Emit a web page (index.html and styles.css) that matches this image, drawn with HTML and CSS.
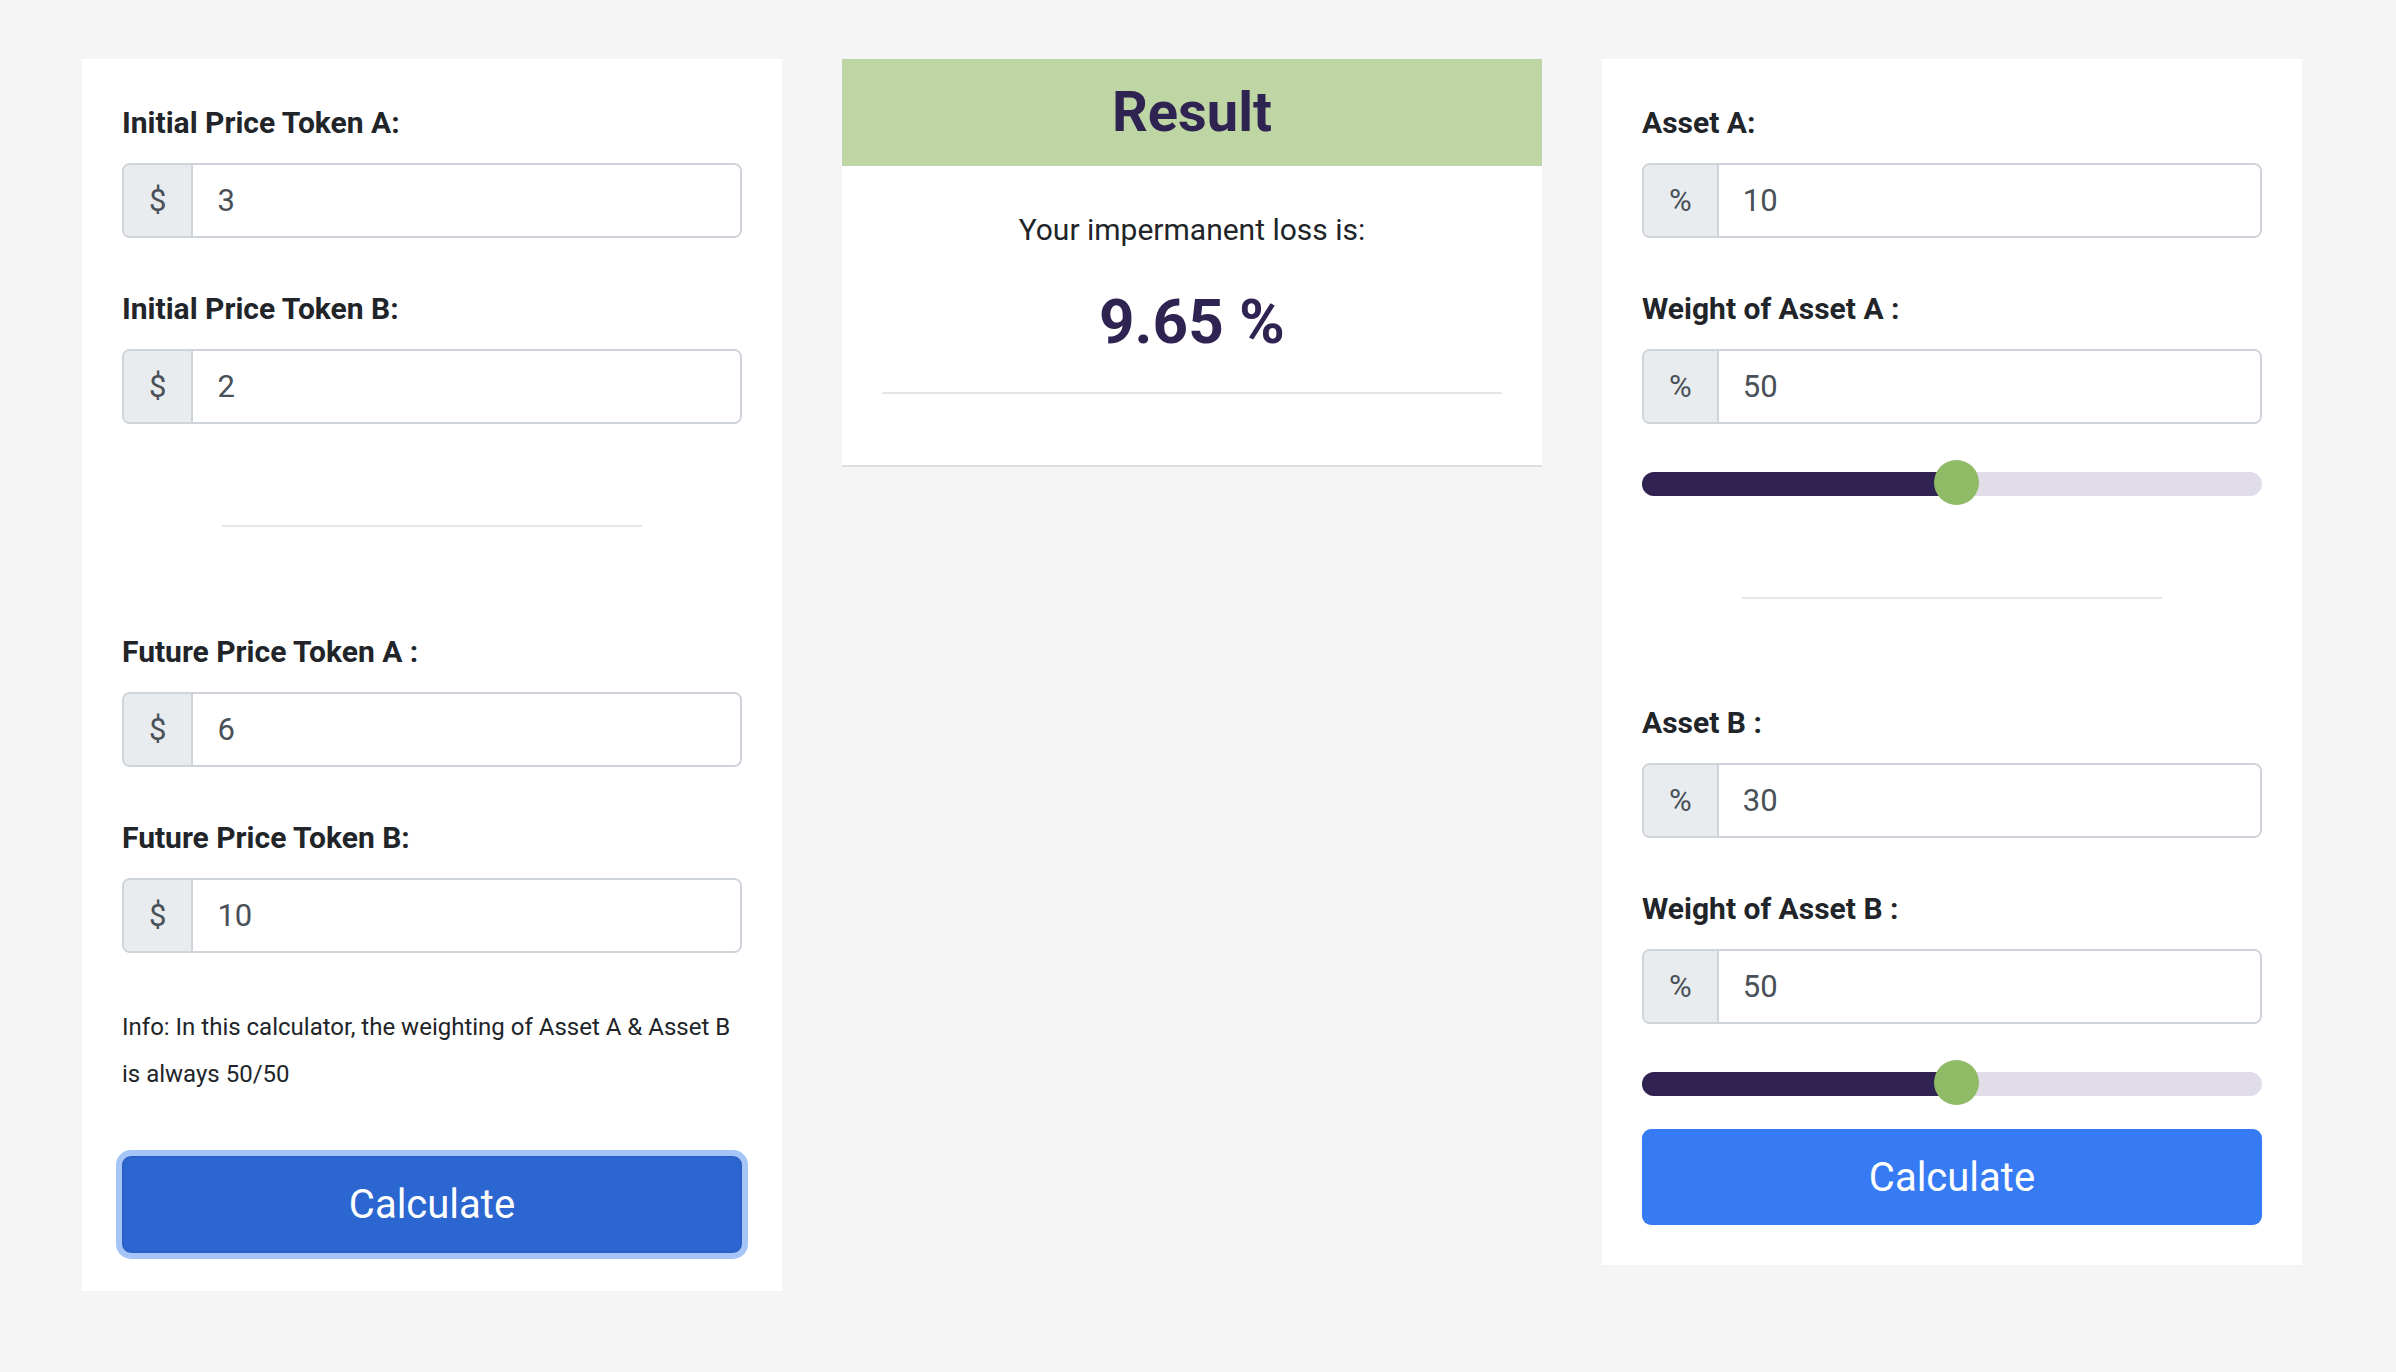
FILE: index.html
```html
<!DOCTYPE html>
<html lang="en">
<head>
<meta charset="utf-8">
<title>Impermanent Loss Calculator</title>
<link rel="stylesheet" href="styles.css">
</head>
<body>
<main class="page">
  <section class="card card-form card-left">
    <div class="field">
      <label class="field-label">Initial Price Token A:</label>
      <div class="input-group"><span class="addon">$</span><input class="input" type="text" value="3"></div>
    </div>
    <div class="field field-last">
      <label class="field-label">Initial Price Token B:</label>
      <div class="input-group"><span class="addon">$</span><input class="input" type="text" value="2"></div>
    </div>
    <div class="divider divider-left"></div>
    <div class="field">
      <label class="field-label">Future Price Token A :</label>
      <div class="input-group"><span class="addon">$</span><input class="input" type="text" value="6"></div>
    </div>
    <div class="field field-before-info">
      <label class="field-label">Future Price Token B:</label>
      <div class="input-group"><span class="addon">$</span><input class="input" type="text" value="10"></div>
    </div>
    <p class="info">Info: In this calculator, the weighting of Asset A &amp; Asset B is always 50/50</p>
    <button class="btn btn-focus" type="button">Calculate</button>
  </section>

  <section class="card card-result">
    <h2 class="result-title">Result</h2>
    <div class="result-body">
      <p class="result-label">Your impermanent loss is:</p>
      <p class="result-value">9.65 %</p>
      <div class="result-divider"></div>
    </div>
  </section>

  <section class="card card-form card-right">
    <div class="field">
      <label class="field-label">Asset A:</label>
      <div class="input-group"><span class="addon">%</span><input class="input" type="text" value="10"></div>
    </div>
    <div class="field field-last">
      <label class="field-label">Weight of Asset A :</label>
      <div class="input-group"><span class="addon">%</span><input class="input" type="text" value="50"></div>
    </div>
    <div class="slider" role="slider" aria-valuenow="50">
      <div class="track"><div class="fill" style="width:51%"></div><div class="thumb" style="left:50%"></div></div>
    </div>
    <div class="divider divider-right"></div>
    <div class="field">
      <label class="field-label">Asset B :</label>
      <div class="input-group"><span class="addon">%</span><input class="input" type="text" value="30"></div>
    </div>
    <div class="field field-last">
      <label class="field-label">Weight of Asset B :</label>
      <div class="input-group"><span class="addon">%</span><input class="input" type="text" value="50"></div>
    </div>
    <div class="slider" role="slider" aria-valuenow="50">
      <div class="track"><div class="fill" style="width:51%"></div><div class="thumb" style="left:50%"></div></div>
    </div>
    <button class="btn btn-primary" type="button">Calculate</button>
  </section>
</main>
</body>
</html>
```

FILE: styles.css
```css
* { box-sizing: border-box; }

html, body {
  margin: 0;
  padding: 0;
  background: #f5f5f5;
}

body {
  font-family: Roboto, "Liberation Sans", Arial, sans-serif;
  color: #212529;
  min-height: 1372px;
}

.page {
  display: flex;
  align-items: flex-start;
  gap: 60px;
  padding: 59px 0 0 82px;
}

.card {
  width: 700px;
  flex: 0 0 700px;
  background: #ffffff;
}

.card-form {
  padding: 46px 40px 38px;
}

.card-right {
  padding-bottom: 40px;
}

/* fields */
.field {
  margin-bottom: 53px;
}

.field-last {
  margin-bottom: 0;
}

.field-before-info {
  margin-bottom: 51px;
}

.field-label {
  display: block;
  font-size: 30px;
  line-height: 36px;
  font-weight: 700;
  color: #212529;
  margin-bottom: 22px;
}

.input-group {
  display: flex;
  height: 75px;
  border: 2px solid #ced4da;
  border-radius: 8px;
  overflow: hidden;
  background: #ffffff;
}

.addon {
  display: flex;
  align-items: center;
  justify-content: center;
  padding: 0 25px;
  background: #e9ecef;
  border-right: 2px solid #ced4da;
  font-size: 31px;
  color: #495057;
}

.input {
  flex: 1;
  min-width: 0;
  border: none;
  outline: none;
  padding: 0 24px;
  font-family: Roboto, "Liberation Sans", Arial, sans-serif;
  font-size: 31px;
  color: #495057;
  background: #ffffff;
}

/* dividers */
.divider {
  width: 420px;
  height: 2px;
  background: #e6e6e6;
}

.divider-left {
  margin: 101px auto 107px;
}

.divider-right {
  margin: 91px auto 106px;
}

/* info text */
.info {
  margin: 0;
  font-size: 24px;
  line-height: 46.5px;
  color: #212529;
}

/* buttons */
.btn {
  display: block;
  width: 100%;
  border-radius: 9px;
  font-family: Roboto, "Liberation Sans", Arial, sans-serif;
  font-size: 40px;
  font-weight: 400;
  color: #ffffff;
  cursor: pointer;
}

.btn-focus {
  height: 97px;
  margin-top: 59px;
  background: #2c66d0;
  border: 2px solid #2a5fc6;
  box-shadow: 0 0 0 6px #a5c4f7;
}

.btn-primary {
  height: 96px;
  margin-top: 23px;
  background: #377bf4;
  border: none;
}

/* sliders */
.slider {
  display: flex;
  align-items: center;
  height: 45px;
  margin-top: 37px;
}

.track {
  position: relative;
  width: 100%;
  height: 24px;
  border-radius: 12px;
  background: #e0dde9;
}

.fill {
  height: 100%;
  border-radius: 12px 0 0 12px;
  background: #302351;
}

.thumb {
  position: absolute;
  top: 50%;
  width: 45px;
  height: 45px;
  margin-top: -23.5px;
  margin-left: -18px;
  border-radius: 50%;
  background: #8fbb67;
}

/* result card */
.card-result {
  border-bottom: 2px solid #dedede;
}

.result-title {
  margin: 0;
  height: 107px;
  line-height: 107px;
  background: #bed6a4;
  text-align: center;
  font-size: 56px;
  font-weight: 700;
  color: #2f2352;
}

.result-body {
  padding: 46px 40px 71px;
  text-align: center;
}

.result-label {
  margin: 0;
  font-size: 30px;
  line-height: 36px;
  color: #212529;
}

.result-value {
  margin: 35px 0 0;
  font-size: 62px;
  line-height: 77px;
  font-weight: 700;
  color: #2f2352;
}

.result-divider {
  margin-top: 32px;
  height: 2px;
  background: #e5e5e5;
}
```
